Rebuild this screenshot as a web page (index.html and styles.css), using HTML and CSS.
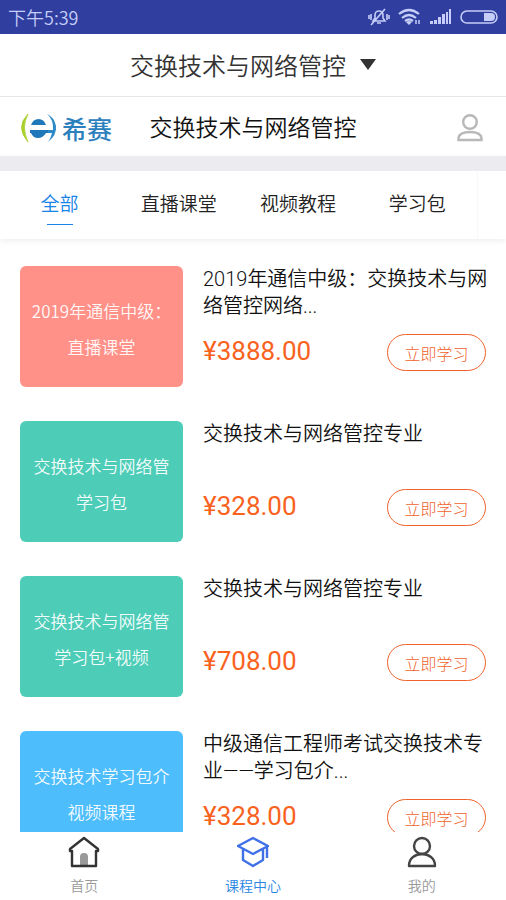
FILE: index.html
```html
<!DOCTYPE html>
<html lang="zh-CN">
<head>
<meta charset="utf-8">
<meta name="viewport" content="width=device-width, initial-scale=1">
<title>课程中心</title>
<link rel="stylesheet" href="styles.css">
</head>
<body>
<div class="status">
  <span>下午5:39</span>
  <div class="status-icons">
    <svg width="22" height="18" viewBox="0 0 22 18" fill="none" stroke="currentColor" stroke-width="1.6"><path d="M5 13h12l-2-3V7a4 4 0 0 0-8 0v3zM9 15h4M3 17 17 1M3 6v6M1 7v4M19 6v6M21 7v4"/></svg>
    <svg width="24" height="18" viewBox="0 0 24 18" fill="none" stroke="currentColor" stroke-width="2.2"><path d="M1 6q10-8 20 0M4 10q7-6 14 0M7 13q4-3 8 0"/><path d="m11 17-3-3q3-2 6 0z" fill="currentColor" stroke="none"/><path d="M18 12v4M21 12v4" stroke-width="1.5"/></svg>
    <svg width="22" height="16" viewBox="0 0 22 16" fill="currentColor"><path d="M0 12h3v3H0zM4 11h3v4H4zM8 8h3v7H8zM12 5h3v10h-3zM16 3h2v12h-2zM19 0h2v15h-2z"/></svg>
    <svg width="38" height="14" viewBox="0 0 38 14"><rect x="1" y="1" width="36" height="12" rx="6" fill="none" stroke="currentColor" stroke-width="1.6"/><path d="M24 3h7a4 4 0 0 1 0 8h-7z" fill="currentColor"/></svg>
  </div>
</div>
<header class="picker">
  <button class="picker-button" type="button">交换技术与网络管控
    <svg width="16" height="12" viewBox="0 0 16 12" fill="currentColor"><path d="M0 0h16L8 11z"/></svg>
  </button>
</header>
<div class="brand">
  <a class="logo" href="#">
    <svg width="37" height="30" viewBox="0 0 37 30"><path d="M8 1Q-5 14 8 29Q1 14 8 1z" fill="#a9cf2c" stroke="#a9cf2c" stroke-width=".8"/><path d="M27 1Q34 7 33 17H20v3h12Q31 25 28 29Q37 22 36 13Q34 4 27 1z" fill="#2c8ac8"/><path d="M11 12Q13 6 18.500 6T26 12z" fill="#1f78b9"/><path d="M10 17h18v3h-2q-3 5-8 5t-7-5h-1z" fill="#1f78b9"/></svg>
    <span>希赛</span>
  </a>
  <h1>交换技术与网络管控</h1>
  <button class="profile" type="button" aria-label="个人">
    <svg width="26" height="28" viewBox="0 0 26 28" fill="none" stroke="currentColor" stroke-width="2.4"><circle cx="13" cy="8" r="6.8"/><path d="M1.5 26v-2q1-6 11.5-6t11.5 6v2z"/></svg>
  </button>
</div>
<nav class="tabs">
  <div class="tab-strip">
    <a class="tab active" href="#">全部</a>
    <a class="tab" href="#">直播课堂</a>
    <a class="tab" href="#">视频教程</a>
    <a class="tab" href="#">学习包</a>
  </div>
</nav>
<main class="courses">
  <article class="course">
    <div class="thumb coral"><span>2019年通信中级：</span><span>直播课堂</span></div>
    <div class="info"><h2>2019年通信中级：交换技术与网络管控网络...</h2><div class="buy"><strong>¥3888.00</strong><button type="button">立即学习</button></div></div>
  </article>
  <article class="course">
    <div class="thumb green"><span>交换技术与网络管</span><span>学习包</span></div>
    <div class="info"><h2>交换技术与网络管控专业</h2><div class="buy"><strong>¥328.00</strong><button type="button">立即学习</button></div></div>
  </article>
  <article class="course">
    <div class="thumb green"><span>交换技术与网络管</span><span>学习包+视频</span></div>
    <div class="info"><h2>交换技术与网络管控专业</h2><div class="buy"><strong>¥708.00</strong><button type="button">立即学习</button></div></div>
  </article>
  <article class="course">
    <div class="thumb blue"><span>交换技术学习包介</span><span>视频课程</span></div>
    <div class="info"><h2>中级通信工程师考试交换技术专业——学习包介...</h2><div class="buy"><strong>¥328.00</strong><button type="button">立即学习</button></div></div>
  </article>
</main>
<nav class="bottom">
  <a href="#"><svg width="32" height="32" viewBox="0 0 32 32" fill="none" stroke="#333" stroke-width="2.4" stroke-linejoin="round" stroke-linecap="round"><path d="M12 29V21a4 4 0 0 1 8 0v8z" fill="#999" stroke="none"/><path d="M2 15v-2L16 2l14 11v2M4 15v15h24V15"/></svg><span>首页</span></a>
  <a class="current" href="#"><svg width="32" height="32" viewBox="0 0 32 32" fill="none" stroke="#4070e8" stroke-width="2.4" stroke-linejoin="round"><path d="M16 2 1 10l15 8 15-8zM6 13v11l10 6 10-6V13M30 11v11"/></svg><span>课程中心</span></a>
  <a href="#"><svg width="32" height="32" viewBox="0 0 32 32" fill="none" stroke="#444" stroke-width="2.4" stroke-linejoin="round"><circle cx="16" cy="10" r="8"/><path d="M3 30q0-6 4-9 4-3 9-3t9 3q4 3 4 9z"/></svg><span>我的</span></a>
</nav>
</body>
</html>
```

FILE: styles.css
```css
* { box-sizing: border-box; }
body {
  margin: 0;
  height: 100vh;
  display: flex;
  flex-direction: column;
  overflow: hidden;
  background: #fff;
  color: #222;
  font-family: "Noto Sans CJK SC", sans-serif;
  font-weight: 350;
}
button { font-family: inherit; font-weight: inherit; background: none; border: 0; padding: 0; color: inherit; }
a { color: inherit; text-decoration: none; }
h1, h2 { margin: 0; font-weight: 350; }
svg { display: block; flex: none; }

.status {
  flex: none;
  display: flex;
  align-items: center;
  justify-content: space-between;
  height: 34px;
  padding: 0 8px;
  background: #303f9f;
  color: #c5cdf8;
  font-size: 18px;
}
.status-icons { display: flex; align-items: center; gap: 8px; }

.picker {
  flex: none;
  display: flex;
  justify-content: center;
  height: 63px;
  border-bottom: 1px solid #e6e6e6;
}
.picker-button { display: flex; align-items: center; gap: 14px; font-size: 24px; line-height: 32px; color: #333; }

.brand {
  flex: none;
  position: relative;
  display: flex;
  align-items: center;
  justify-content: space-between;
  height: 59px;
  padding: 3px 23px 0 20px;
}
.logo { display: flex; align-items: center; gap: 5px; color: #2c80bd; font-size: 25px; font-weight: 500; }
.brand h1 { position: absolute; left: 0; right: 0; top: 12px; line-height: 34px; text-align: center; font-size: 23px; color: #111; pointer-events: none; }
.profile { color: #b8b8b8; }

.tabs {
  flex: none;
  border-top: 15px solid #ebebf0;
  padding-right: 28px;
  box-shadow: 0 2px 6px #00000012;
}
.tab-strip { display: flex; justify-content: space-around; height: 68px; border-right: 1px solid #f8f8f8; }
.tab { flex: 1; display: flex; flex-direction: column; align-items: center; padding-top: 18px; font-size: 19px; line-height: 28px; }
.active { color: #1684e8; }
.active::after { content: ""; width: 26px; height: 1px; margin-top: 7px; background: #1684e8; }

.courses { flex: 1; min-height: 0; overflow: hidden; display: flex; flex-direction: column; gap: 34px; padding: 27px 20px 0; }
.course { flex: none; display: flex; gap: 20px; }
.thumb {
  flex: none;
  width: 163px;
  height: 121px;
  display: flex;
  flex-direction: column;
  justify-content: center;
  padding: 4px 11px 0;
  border-radius: 6px;
  color: #fffffff0;
  font-size: 17px;
  line-height: 36px;
  text-align: center;
  white-space: nowrap;
}
.coral { background: #ff9189; }
.green { background: #4dcdb8; }
.blue { background: #4dbdfc; }
.info { flex: 1; min-width: 0; display: flex; flex-direction: column; justify-content: space-between; padding-bottom: 16px; }
.info h2 { margin-right: -8px; font-family: Roboto, "Noto Sans CJK SC", sans-serif; font-size: 20px; line-height: 27px; color: #111; }
.buy { display: flex; align-items: center; justify-content: space-between; }
.buy strong { padding-bottom: 3px; font-family: Roboto, sans-serif; font-size: 26px; line-height: 30px; font-weight: 400; color: #f9621d; }
.buy button { width: 99px; height: 37px; border: 1px solid #f0622a; border-radius: 19px; color: #f0622a; font-size: 16px; font-weight: 300; }

.bottom { flex: none; display: flex; height: 68px; background: #fff; }
.bottom a { flex: 1; display: flex; flex-direction: column; align-items: center; gap: 7px; padding-top: 4px; color: #999; font-size: 14px; line-height: 20px; }
.bottom .current { color: #2a86e2; }
```
